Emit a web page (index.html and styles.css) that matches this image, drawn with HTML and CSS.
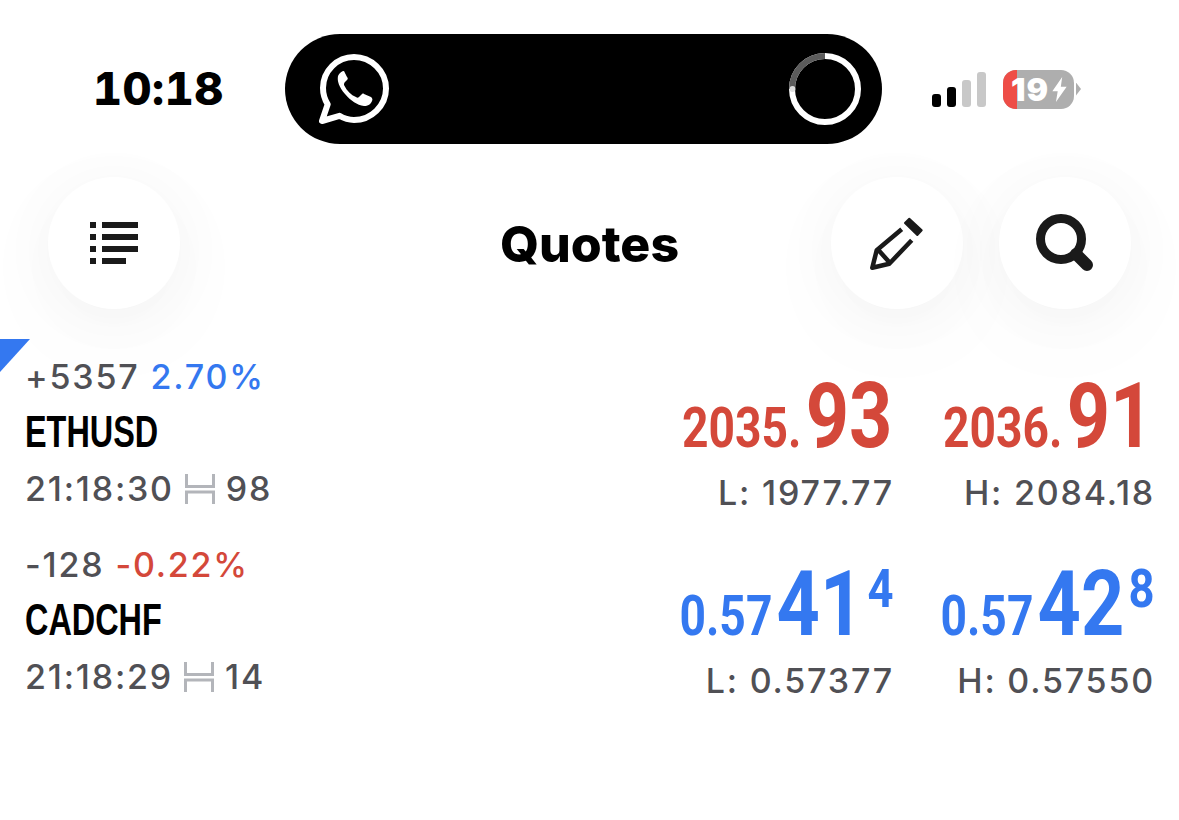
FILE: index.html
```html
<!DOCTYPE html>
<html lang="en">
<head>
<meta charset="utf-8">
<title>Quotes</title>
<link rel="stylesheet" href="styles.css">
</head>
<body>
<div class="status">
  <div class="time">10:18</div>
  <div class="island">
    <svg class="wa" viewBox="0 0 70 70" width="70" height="70"><path d="M35 3C18 3 4 17 4 34c0 6 1.700 11.500 4.700 16.300L3 67l17.500-5.200C25 64.500 30 66 35 66c17 0 32-14 32-31.500S52 3 35 3Z" fill="none" stroke="#fff" stroke-width="6" stroke-linejoin="round"/><path d="M25 17c-2 0-5 2-6 5-1 5 1 11 7 18 6 7 12 11 19 12 4 0 7-2 8-5 1-2 0-3-1-4l-7-3c-1-1-2 0-3 1l-2 2c-1 1-2 1-3 0-5-2-9-6-12-12 0-1 0-2 1-3l2-2c1-1 1-2 0-3l-3-6Z" fill="#fff"/></svg>
    <svg class="ring" viewBox="0 0 72 72" width="72" height="72"><circle cx="36" cy="36" r="33" fill="none" stroke="#fff" stroke-width="6"/><path d="M36 3A33 33 0 0 0 3 36" fill="none" stroke="#5c5c5c" stroke-width="6"/><circle cx="3.500" cy="36" r="3" fill="#ddd"/></svg>
  </div>
  <div class="indicators">
    <div class="signal"><i class="bar b1 on"></i><i class="bar b2 on"></i><i class="bar b3"></i><i class="bar b4"></i></div>
    <div class="battery">
      <div class="cell"><span class="level"></span><span class="pct">19</span><svg class="bolt" viewBox="0 0 16 28" width="15" height="25"><path d="M11 0 0 16h6L4 28 16 11H9.500Z" fill="#fff"/></svg></div>
      <span class="nub"></span>
    </div>
  </div>
</div>

<header class="toolbar">
  <button class="round"><svg viewBox="0 0 48 42" width="48" height="42"><path d="M0 0h6v6H0zM12 0h36v6H12zM0 12h6v6H0zM12 12h36v6H12zM0 24h6v6H0zM12 24h36v6H12zM0 36h6v6H0zM12 36h24v6H12z" fill="#1a1a1a"/></svg></button>
  <h1 class="title">Quotes</h1>
  <div class="actions">
    <button class="round"><svg viewBox="870 215 55 54" width="55" height="54"><path d="M909.300 217.700 921.700 229.300 917.300 234 905 222Z" fill="#1a1a1a" stroke="#1a1a1a" stroke-width="2" stroke-linejoin="round"/><path d="M901.700 228.300 876.700 249.300 872.300 266.700 889.300 262.700 911.700 239.300M877.500 248 890 262" fill="none" stroke="#1a1a1a" stroke-width="4.500" stroke-linejoin="round"/></svg></button>
    <button class="round"><svg viewBox="1033 210 64 64" width="64" height="64"><circle cx="1061" cy="238" r="20.500" fill="none" stroke="#1a1a1a" stroke-width="9"/><path d="M1076 253 1087 264" stroke="#1a1a1a" stroke-width="12" stroke-linecap="round"/></svg></button>
  </div>
</header>

<main class="list">
  <span class="corner"></span>
  <article class="quote">
    <div class="info">
      <div class="line"><span>+5357</span> <span class="up">2.70%</span></div>
      <div class="symbol">ETHUSD</div>
      <div class="line"><span>21:18:30</span><svg class="spread" viewBox="0 0 30 30" width="30" height="30"><path d="M1.500 0v12.500h27V0M1.500 30V18h27v12" fill="none" stroke="#b3b5ba" stroke-width="3"/></svg><span>98</span></div>
    </div>
    <div class="col red"><div class="price"><span class="sm">2035.</span><span class="lg">93</span></div><div class="line">L: 1977.77</div></div>
    <div class="col red"><div class="price"><span class="sm">2036.</span><span class="lg">91</span></div><div class="line">H: 2084.18</div></div>
  </article>
  <article class="quote">
    <div class="info">
      <div class="line"><span>-128</span> <span class="down">-0.22%</span></div>
      <div class="symbol">CADCHF</div>
      <div class="line"><span>21:18:29</span><svg class="spread" viewBox="0 0 30 30" width="30" height="30"><path d="M1.500 0v12.500h27V0M1.500 30V18h27v12" fill="none" stroke="#b3b5ba" stroke-width="3"/></svg><span>14</span></div>
    </div>
    <div class="col blue"><div class="price"><span class="sm">0.57</span><span class="lg">41</span><sup class="tick">4</sup></div><div class="line">L: 0.57377</div></div>
    <div class="col blue"><div class="price"><span class="sm">0.57</span><span class="lg">42</span><sup class="tick">8</sup></div><div class="line">H: 0.57550</div></div>
  </article>
</main>
</body>
</html>
```

FILE: styles.css
```css
* { box-sizing: border-box; }
html, body { margin: 0; height: 100%; overflow: hidden; background: #fff; }
body { font-family: Inter, "Liberation Sans", sans-serif; color: #000; }

.status { display: flex; align-items: center; height: 110px; margin-top: 34px; padding-left: 93px; }
.time { width: 192px; font-size: 45px; font-weight: 800; letter-spacing: 0.5px; font-variant-numeric: tabular-nums; line-height: 108px; }
.island { width: 597px; height: 110px; border-radius: 55px; background: #000; display: flex; align-items: center; justify-content: space-between; padding: 0 21px 0 34px; }
.indicators { display: flex; align-items: center; gap: 17px; margin-left: 50px; }
.signal { display: flex; align-items: flex-end; gap: 6px; height: 35px; margin-top: 1px; }
.bar { display: block; width: 9px; border-radius: 3px; background: #c8c8c8; }
.bar.on { background: #000; }
.b1 { height: 13px; } .b2 { height: 20px; } .b3 { height: 27px; } .b4 { height: 35px; }
.battery { display: flex; align-items: center; gap: 2px; }
.cell { position: relative; width: 71px; height: 39px; border-radius: 13px; background: #aeaeae; overflow: hidden; display: flex; align-items: center; padding-left: 8px; }
.level { position: absolute; left: 0; top: 0; bottom: 0; width: 14px; background: #ee4d47; }
.pct { position: relative; color: #fff; font-size: 32px; font-weight: 900; line-height: 39px; letter-spacing: 1px; }
.bolt { position: relative; margin-left: 3px; }
.nub { width: 5px; height: 13px; background: #aeaeae; clip-path: polygon(0 0, 100% 50%, 0 100%); }

.toolbar { display: flex; align-items: center; justify-content: space-between; height: 132px; margin-top: 33px; padding: 0 48px; position: relative; }
.round { width: 132px; height: 132px; border: 0; padding: 0; border-radius: 50%; background: #fff; display: flex; align-items: center; justify-content: center; box-shadow: 0 8px 60px rgba(0, 0, 0, 0.04), 0 24px 110px rgba(0, 0, 0, 0.03); }
.actions { display: flex; gap: 36px; }
.title { position: absolute; left: 0; right: 0; margin: 0; text-align: center; font-size: 50px; font-weight: 800; letter-spacing: 0; line-height: 132px; padding-top: 1px; }

.list { position: relative; margin-top: 40px; }
.corner { position: absolute; left: 0; top: -10px; width: 30px; height: 33px; background: #3478f0; clip-path: polygon(0 0, 100% 0, 0 100%); }
.quote { display: grid; grid-template-columns: 1fr 210px 210px; column-gap: 51px; height: 188px; padding: 0 26px 0 25px; }
.info { display: flex; flex-direction: column; }
.line { font-size: 34px; line-height: 56px; color: #505055; font-weight: 500; letter-spacing: 1.8px; white-space: nowrap; display: flex; gap: 11px; align-items: center; }
.symbol { font-family: "Liberation Sans", sans-serif; font-weight: 700; font-size: 45px; line-height: 56px; color: #000; margin: -1px 0 1px; transform: scaleX(0.72); transform-origin: left center; }
.spread { margin: 0; }
.up { color: #3478f0; }
.down { color: #d4483a; }
.col { display: flex; flex-direction: column; align-items: flex-end; padding-top: 26px; }
.col .line { margin: 6px -2px 0 0; }
.price { height: 84px; display: flex; align-items: baseline; font-family: Roboto, "Liberation Sans", sans-serif; font-weight: 700; line-height: 84px; transform: scaleX(0.84); transform-origin: right center; }
.sm { font-size: 55px; }
.lg { font-size: 90px; margin-left: 5px; }
.tick { font-size: 54px; line-height: 1; align-self: flex-start; margin: -1px -2px 0 5px; }
.red { color: #d4483a; }
.blue { color: #3478f0; }
```
